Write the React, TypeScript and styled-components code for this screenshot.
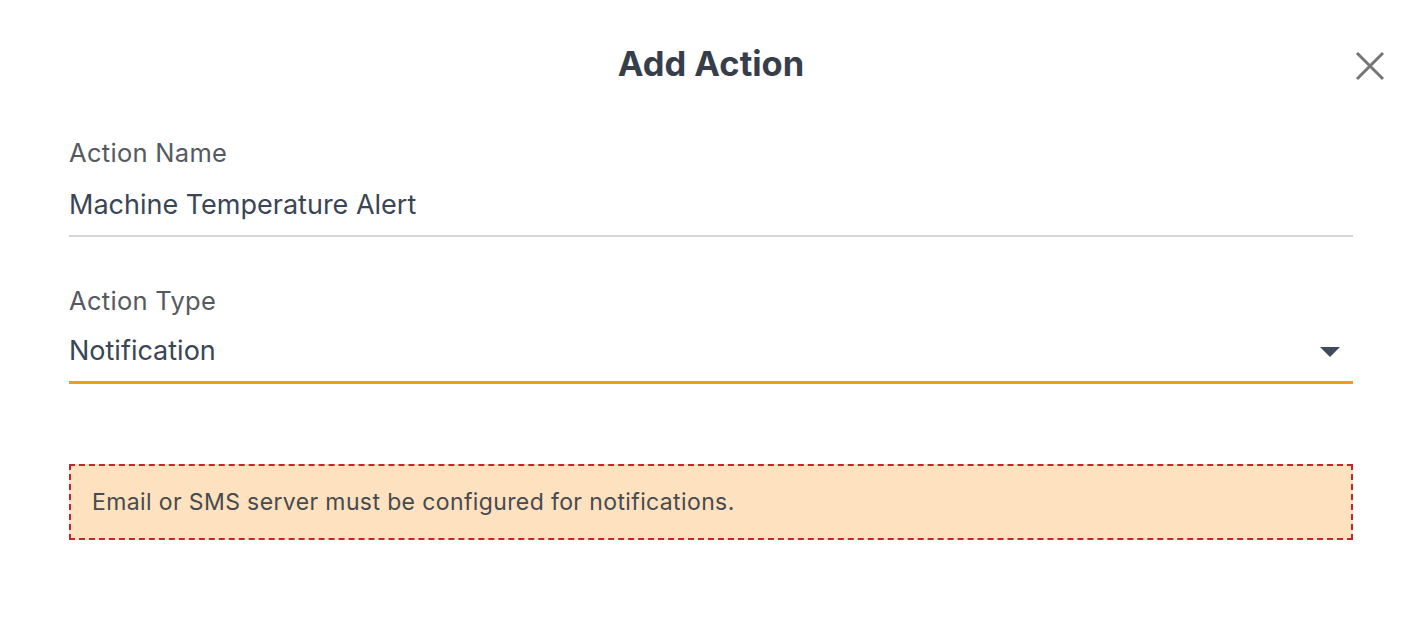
import React from "react";
import styled, { createGlobalStyle } from "styled-components";

const GlobalStyle = createGlobalStyle`
  html, body {
    margin: 0;
    padding: 0;
    background: #ffffff;
    font-family: Inter, "Liberation Sans", sans-serif;
  }
`;

const Dialog = styled.div`
  width: 1420px;
  height: 618px;
  box-sizing: border-box;
  padding: 0 67px 0 69px;
  display: flex;
  flex-direction: column;
`;

const Header = styled.div`
  position: relative;
  height: 136px;
  display: flex;
  justify-content: center;
  padding-top: 42px;
  box-sizing: border-box;
`;

const Title = styled.h1`
  margin: 0;
  font-size: 34.5px;
  font-weight: 700;
  color: #373e4b;
  line-height: 44px;
`;

const CloseButton = styled.button`
  position: absolute;
  right: -32px;
  top: 51px;
  width: 30px;
  height: 30px;
  padding: 0;
  border: none;
  background: none;
  cursor: pointer;
  display: flex;
  align-items: center;
  justify-content: center;
`;

const Field = styled.div<{ $mb: number }>`
  display: flex;
  flex-direction: column;
  margin-bottom: ${(p) => p.$mb}px;
`;

const Label = styled.label`
  font-size: 25.5px;
  letter-spacing: 0.3px;
  color: #555a61;
  line-height: 34px;
  height: 34px;
`;

const Value = styled.div<{ $focused?: boolean }>`
  display: flex;
  align-items: center;
  justify-content: space-between;
  font-size: 27px;
  color: #3a4556;
  height: ${(p) => (p.$focused ? 61 : 62)}px;
  box-sizing: content-box;
  padding-top: ${(p) => (p.$focused ? 2 : 3)}px;
  border-bottom: ${(p) => (p.$focused ? "3px solid #f59c0f" : "2px solid #d5d5d5")};
`;

const Caret = styled.span`
  width: 0;
  height: 0;
  margin-right: 13px;
  margin-top: 3px;
  border-left: 10px solid transparent;
  border-right: 10px solid transparent;
  border-top: 10px solid #3f4a5a;
`;

const Notice = styled.div`
  margin-top: 80px;
  height: 76px;
  box-sizing: border-box;
  border: 2px dashed #c3262f;
  background: #fee1be;
  padding: 0 21px;
  display: flex;
  align-items: center;
  font-size: 23px;
  letter-spacing: 0.38px;
  color: #474a4f;
`;

export default function App() {
  return (
    <>
      <GlobalStyle />
      <Dialog>
        <Header>
          <Title>Add Action</Title>
          <CloseButton aria-label="Close">
            <svg width="30" height="30" viewBox="0 0 30 30">
              <path d="M2 2 L28 28 M28 2 L2 28" stroke="#757575" strokeWidth="3" />
            </svg>
          </CloseButton>
        </Header>
        <Field $mb={47}>
          <Label>Action Name</Label>
          <Value>Machine Temperature Alert</Value>
        </Field>
        <Field $mb={0}>
          <Label>Action Type</Label>
          <Value $focused>
            Notification
            <Caret />
          </Value>
        </Field>
        <Notice>Email or SMS server must be configured for notifications.</Notice>
      </Dialog>
    </>
  );
}
